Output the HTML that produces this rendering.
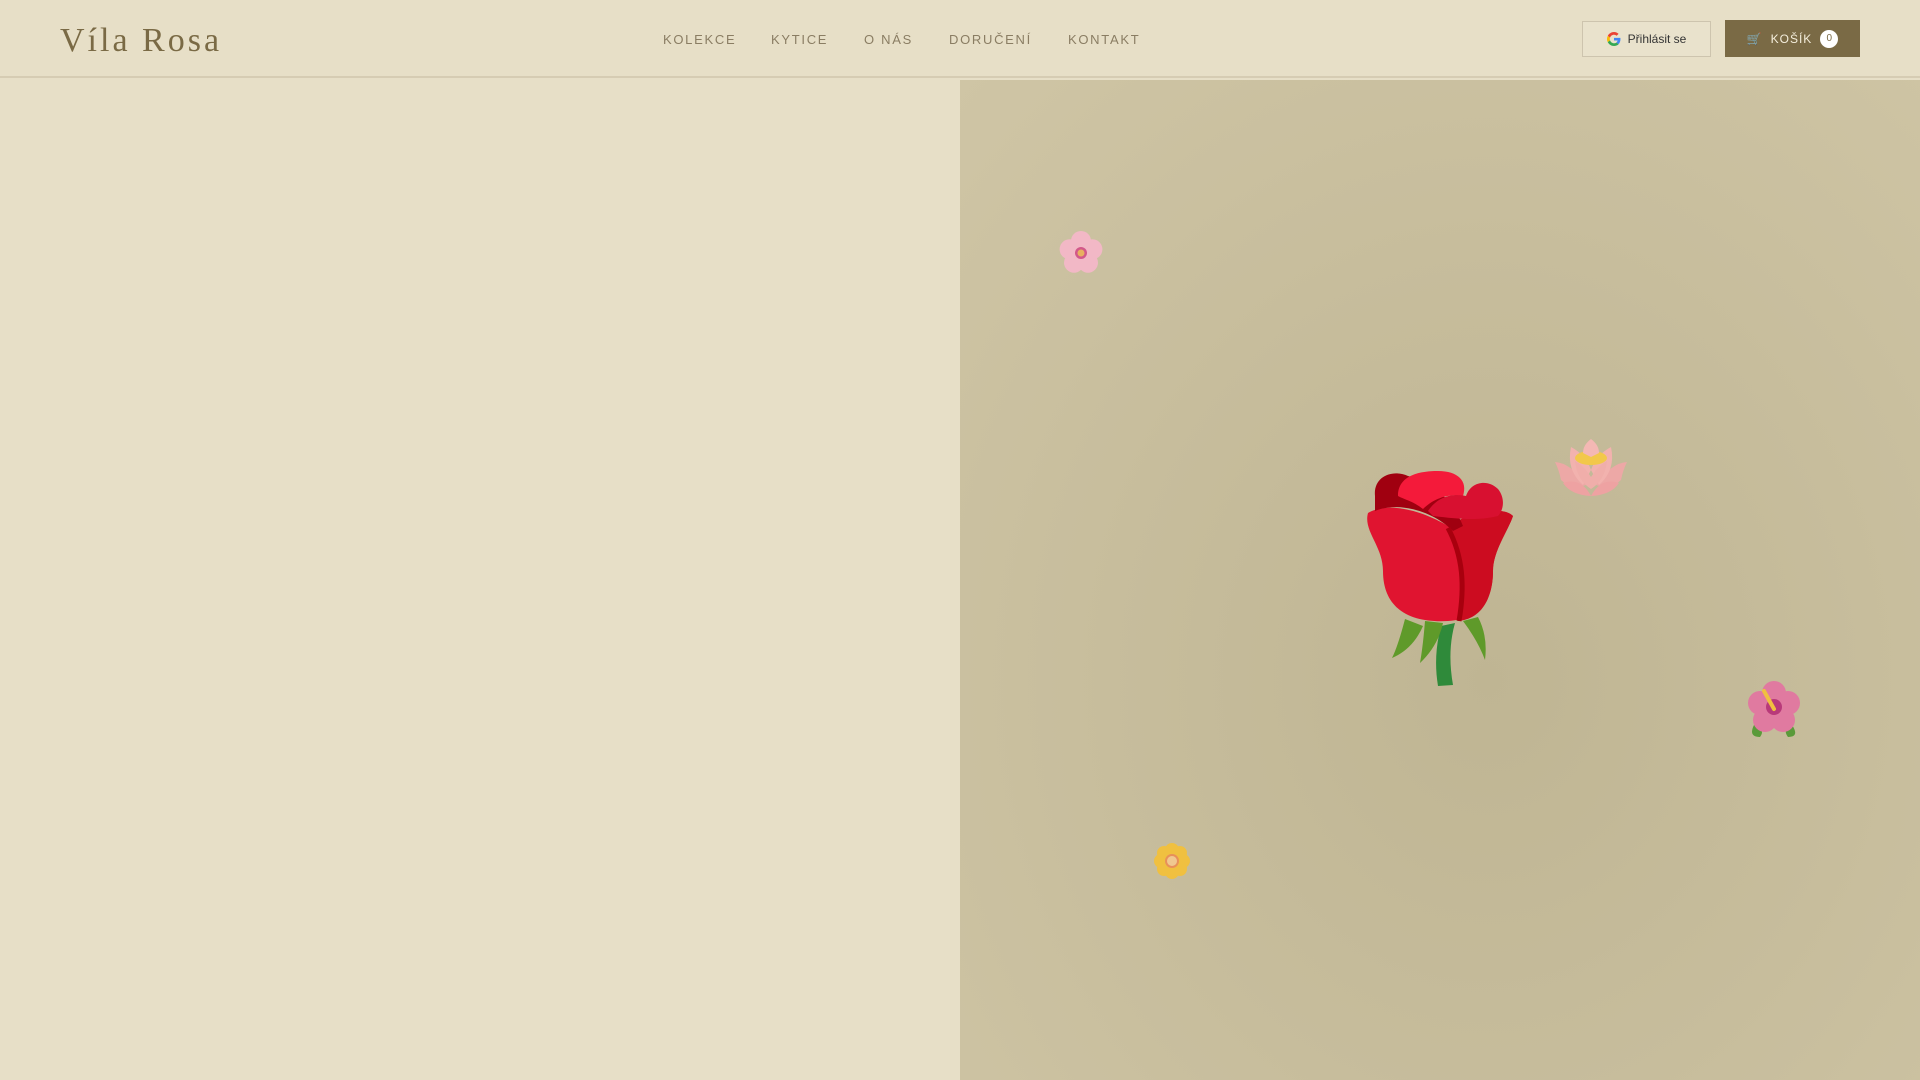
<!DOCTYPE html>
<html><head><meta charset="utf-8"><style>
*{margin:0;padding:0;box-sizing:border-box}
body{width:1920px;height:1080px;overflow:hidden;background:#e7dfc7;font-family:"Liberation Sans",sans-serif;position:relative}
header{position:absolute;left:0;top:0;width:1920px;height:78px;border-bottom:2px solid #d6ccb3;background:#e7dfc7}
.logo{position:absolute;left:60px;top:22px;font-family:"Liberation Serif",serif;font-size:34px;letter-spacing:3px;color:#7a6a45}
nav a{position:absolute;top:32px;font-size:13px;letter-spacing:1.7px;color:#8a7d63;text-decoration:none}
.login{position:absolute;left:1582px;top:21px;width:129px;height:36px;border:1px solid #cdc4ae;background:#e9e2cc;font-size:12px;color:#333;display:flex;align-items:center;justify-content:center;gap:7px}
.cart{position:absolute;left:1725px;top:20px;width:135px;height:37px;background:#7a6a45;color:#f4eedc;font-size:12px;letter-spacing:1px;display:flex;align-items:center;justify-content:center;gap:8px}
.badge{width:18px;height:18px;border-radius:50%;background:#fff;color:#7a6a45;font-size:10px;display:flex;align-items:center;justify-content:center;letter-spacing:0}
.panel{position:absolute;left:960px;top:80px;width:960px;height:1000px;background:radial-gradient(ellipse at 55% 60%,#bfb593 0%,#c6bc9b 45%,#cfc5a5 100%)}
</style></head><body>
<header>
<div class="logo">Víla Rosa</div>
<nav><a style="left:663px">KOLEKCE</a><a style="left:771px">KYTICE</a><a style="left:864px">O NÁS</a><a style="left:949px">DORUČENÍ</a><a style="left:1068px">KONTAKT</a></nav>
<div class="login"><svg width="14" height="14" viewBox="0 0 48 48"><path fill="#EA4335" d="M24 9.5c3.5 0 6.6 1.2 9 3.5l6.7-6.7C35.6 2.4 30.2 0 24 0 14.6 0 6.6 5.4 2.700 13.2l7.8 6C12.4 13.6 17.7 9.5 24 9.5z"/><path fill="#4285F4" d="M46.1 24.5c0-1.6-.1-3.1-.4-4.5H24v9h12.4c-.5 2.9-2.2 5.3-4.6 7l7.5 5.8c4.4-4 6.8-10 6.8-17.3z"/><path fill="#FBBC05" d="M10.5 28.8A14.5 14.5 0 0 1 9.5 24c0-1.7.3-3.3.9-4.8l-7.8-6A24 24 0 0 0 0 24c0 3.9.9 7.5 2.6 10.8l7.9-6z"/><path fill="#34A853" d="M24 48c6.5 0 11.9-2.1 15.9-5.8l-7.5-5.8c-2.1 1.4-4.8 2.3-8.4 2.3-6.3 0-11.6-4.2-13.5-9.9l-7.9 6C6.6 42.6 14.6 48 24 48z"/></svg>Přihlásit se</div>
<div class="cart"><span style="color:#9ab">🛒</span>KOŠÍK<span class="badge">0</span></div>
</header>
<div class="panel"></div>
<svg style="position:absolute;left:0;top:0" width="1920" height="1080">
<g transform="translate(1081,253)" fill="#f2b8c6">
<circle cx="0" cy="-12" r="10"/><circle cx="11.4" cy="-3.7" r="10"/><circle cx="7" cy="9.7" r="10"/><circle cx="-7" cy="9.7" r="10"/><circle cx="-11.4" cy="-3.7" r="10"/>
<circle r="6" fill="#d2588a"/><circle r="3.5" fill="#e8b060"/></g>
<g transform="translate(1172,861)">
<g fill="#f0c040"><circle cx="0" cy="-11" r="7"/><circle cx="8" cy="-8" r="7"/><circle cx="11" cy="0" r="7"/><circle cx="8" cy="8" r="7"/><circle cx="0" cy="11" r="7"/><circle cx="-8" cy="8" r="7"/><circle cx="-11" cy="0" r="7"/><circle cx="-8" cy="-8" r="7"/></g>
<circle r="7" fill="#e8905a"/><circle r="5" fill="#f0c890"/></g>
<!-- lotus -->
<g transform="translate(1591,465)">
<path d="M-36 -3 Q-20 -2 -5 20 Q-20 25 -30 15 Q-32 5 -36 -3Z" fill="#eda8a6"/>
<path d="M36 -3 Q20 -2 5 20 Q20 25 30 15 Q32 5 36 -3Z" fill="#eda8a6"/>
<path d="M-28 18 Q-10 12 0 31 Q10 12 28 18 Q20 30 0 31 Q-20 30 -28 18Z" fill="#eea2a2"/>
<path d="M-20 -18 Q-25 5 -8 20 L0 5 Q-5 -10 -20 -18Z" fill="#f2b2ae"/>
<path d="M20 -18 Q25 5 8 20 L0 5 Q5 -10 20 -18Z" fill="#f2b2ae"/>
<ellipse cx="0" cy="-7" rx="16" ry="7" fill="#f2c84a"/>
<path d="M0 -26 Q-8 -20 -8 -12 L0 -8 L8 -12 Q8 -20 0 -26Z" fill="#f4b8b4"/>
<path d="M-16 -4 Q-14 15 0 24 Q14 15 16 -4 Q8 0 0 12 Q-8 0 -16 -4Z" fill="#f0aeaa"/>
</g>
<g transform="translate(1774,707)">
<path d="M-20 18 Q-26 30 -14 30 Q-8 22 -20 18Z M18 18 Q26 30 14 30 Q8 22 18 18Z" fill="#5a9a3a"/>
<g fill="#e07aa0"><circle cx="0" cy="-14" r="12"/><circle cx="14" cy="-4" r="12"/><circle cx="9" cy="13" r="12"/><circle cx="-9" cy="13" r="12"/><circle cx="-14" cy="-4" r="12"/></g>
<circle r="8" fill="#b83a7a"/>
<path d="M0 2 L-10 -16" stroke="#f0c040" stroke-width="4" stroke-linecap="round"/>
</g>
<!-- rose -->
<g transform="translate(1363,471)">
<path d="M75 215 Q70 185 78 155 L92 152 Q84 180 90 214Z" fill="#2f8a3a"/>
<path d="M42 148 Q35 175 29 187 Q50 178 60 155Z" fill="#5f9a2a"/>
<path d="M62 150 Q60 175 57 192 Q75 175 80 152Z" fill="#5f9a2a"/>
<path d="M100 150 Q115 170 122 189 Q125 165 115 146Z" fill="#5f9a2a"/>
<path d="M5 42 C0 60 20 75 20 100 C20 140 50 152 85 150 C120 148 130 125 130 100 C130 80 145 60 150 45 C140 35 110 40 85 55 C60 40 25 30 5 42Z" fill="#e01430"/>
<path d="M85 55 C110 40 140 35 150 45 C145 60 130 80 130 100 C130 125 120 148 95 150 C100 110 100 80 85 55Z" fill="#cc0c20"/>
<path d="M12 25 C10 5 30 -2 45 5 C70 10 90 30 100 55 L90 60 C70 40 35 30 12 40Z" fill="#a00010"/>
<path d="M35 25 C35 5 55 0 75 0 C95 0 105 10 100 25 C85 22 70 28 60 38 C50 30 40 28 35 25Z" fill="#f41a3a"/>
<path d="M65 40 C75 25 90 22 103 25 C108 10 125 8 135 18 C143 28 140 40 135 45 C115 50 95 48 70 45Z" fill="#d81030"/>
<path d="M85 57 C100 85 102 115 96 150" stroke="#a8000e" stroke-width="5" fill="none"/>
</g>
</svg>
</body></html>
